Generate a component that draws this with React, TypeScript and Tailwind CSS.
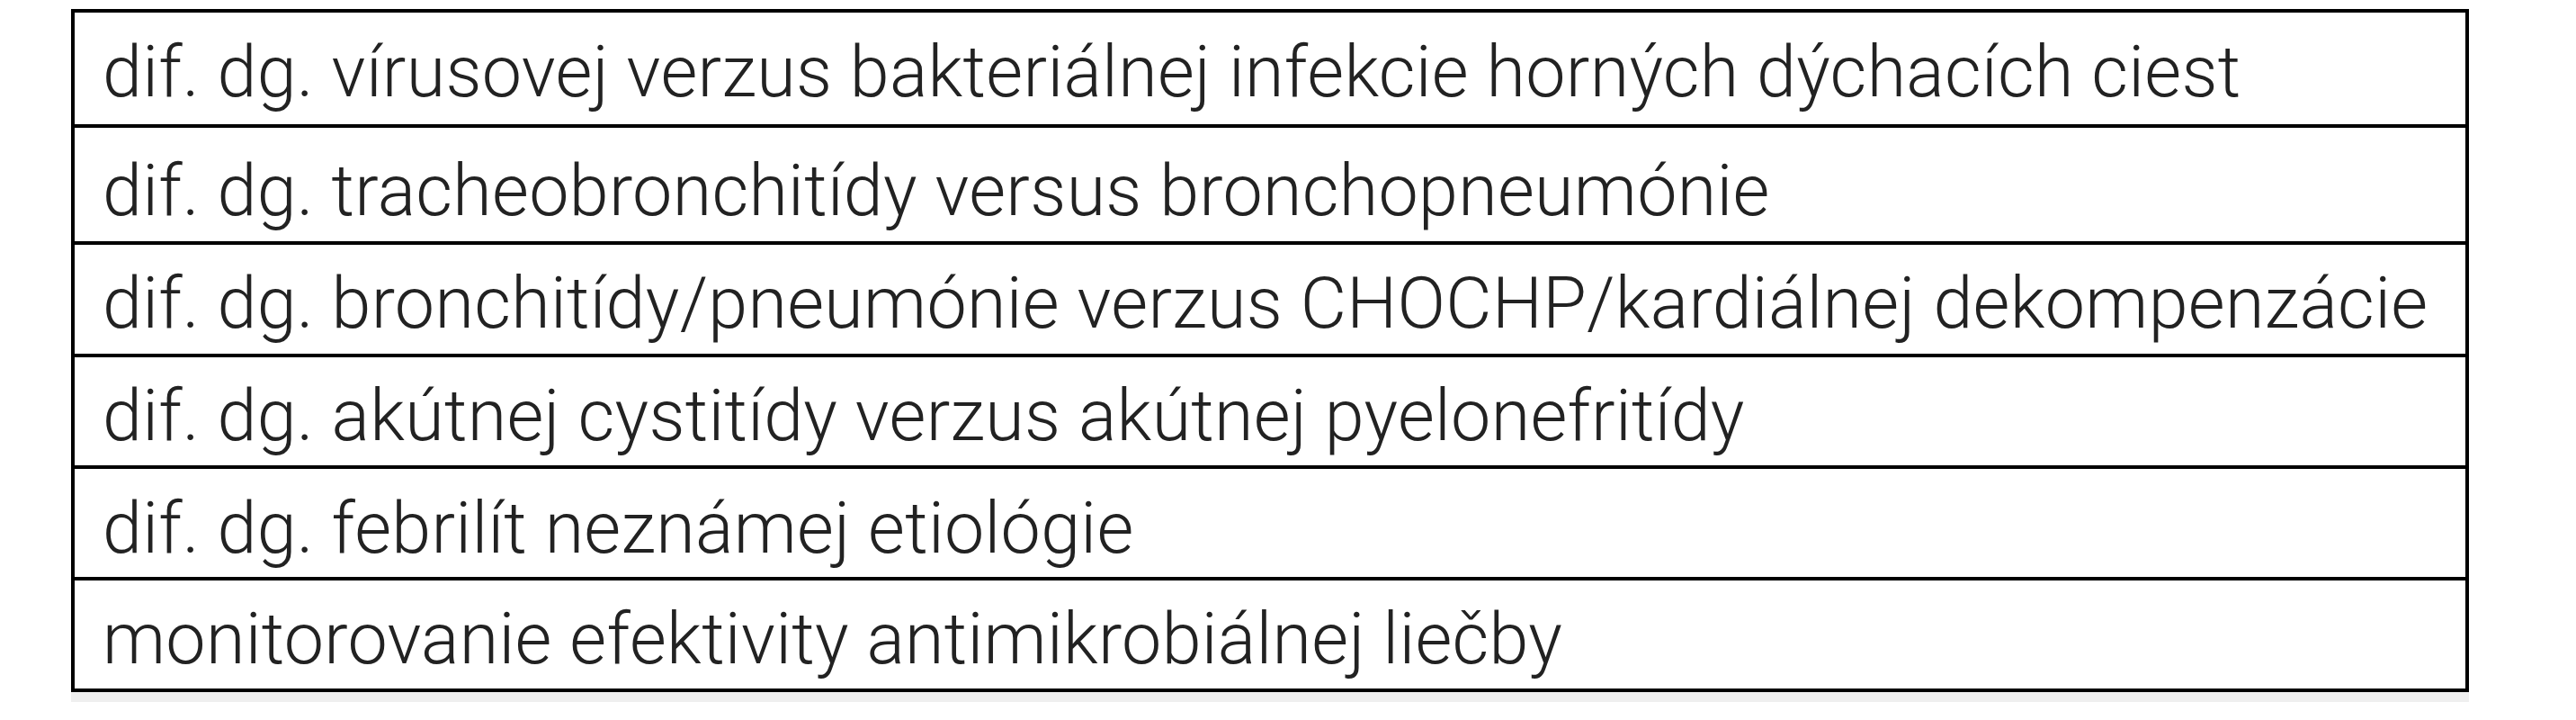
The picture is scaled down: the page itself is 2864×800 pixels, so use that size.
const rows = [
  { text: "dif. dg. vírusovej verzus bakteriálnej infekcie horných dýchacích ciest", h: "h-[124px]", pt: "pt-[27px]" },
  { text: "dif. dg. tracheobronchitídy versus bronchopneumónie", h: "h-[130px]", pt: "pt-[31px]" },
  { text: "dif. dg. bronchitídy/pneumónie verzus CHOCHP/kardiálnej dekompenzácie", h: "h-[125px]", pt: "pt-[26px]" },
  { text: "dif. dg. akútnej cystitídy verzus akútnej pyelonefritídy", h: "h-[124px]", pt: "pt-[26px]" },
  { text: "dif. dg. febrilít neznámej etiológie", h: "h-[124px]", pt: "pt-[27px]" },
  { text: "monitorovanie efektivity antimikrobiálnej liečby", h: "h-[124px]", pt: "pt-[26px]" },
];

export default function App() {
  return (
    <div className="min-h-[800px] bg-white pt-[10px] pl-[79px]">
      <div className="w-[2666px] border-4 border-black bg-white">
        {rows.map((row, i) => (
          <div
            key={row.text}
            className={`${row.h} ${row.pt} pl-[31px] ${i > 0 ? "border-t-4 border-black" : ""}`}
          >
            <p className="font-['Roboto',sans-serif] text-[79px] font-light leading-none tracking-[0.3px] text-[#222222] whitespace-nowrap">
              {row.text}
            </p>
          </div>
        ))}
      </div>
      <div className="h-[11px] w-[2666px] bg-[#efefef]" />
    </div>
  );
}
